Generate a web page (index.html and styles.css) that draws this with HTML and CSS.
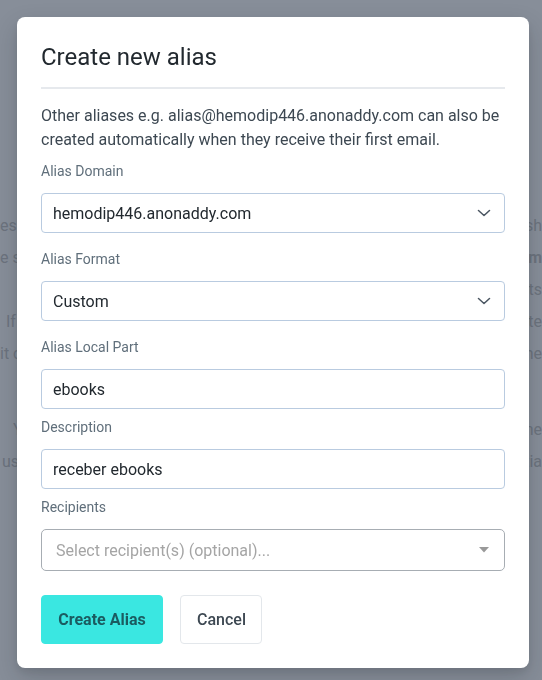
FILE: index.html
```html
<!DOCTYPE html>
<html lang="en">
<head>
<meta charset="utf-8">
<title>Create new alias</title>
<link rel="stylesheet" href="styles.css">
</head>
<body>
<div class="page">
  <div class="bg-line"><span>es c</span><span>nsh</span></div>
  <div class="bg-line"><span>e si</span><span class="bold">nam</span></div>
  <div class="bg-line"><span></span><span>its</span></div>
  <div class="bg-line"><span class="indent-if">If</span><span>ete</span></div>
  <div class="bg-line"><span>it c</span><span>the</span></div>
  <div class="bg-spacer"></div>
  <div class="bg-line"><span class="indent-y">Y</span><span>ne</span></div>
  <div class="bg-line"><span class="indent-us">us</span><span>tia</span></div>
</div>

<div class="overlay">
  <div class="modal">
    <h2 class="title">Create new alias</h2>
    <hr class="rule">
    <p class="intro">Other aliases e.g. alias@hemodip446.anonaddy.com can also be created automatically when they receive their first email.</p>

    <label class="label">Alias Domain</label>
    <div class="select select-gap">
      <span>hemodip446.anonaddy.com</span>
      <svg class="chevron" width="14" height="8" viewBox="0 0 14 8"><path d="M1.5 1.5 L7 6.5 L12.5 1.5" fill="none" stroke="#4a5561" stroke-width="1.5" stroke-linecap="round" stroke-linejoin="round"/></svg>
    </div>

    <label class="label">Alias Format</label>
    <div class="select select-gap">
      <span>Custom</span>
      <svg class="chevron" width="14" height="8" viewBox="0 0 14 8"><path d="M1.5 1.5 L7 6.5 L12.5 1.5" fill="none" stroke="#4a5561" stroke-width="1.5" stroke-linecap="round" stroke-linejoin="round"/></svg>
    </div>

    <label class="label">Alias Local Part</label>
    <input class="field" type="text" value="ebooks">

    <label class="label">Description</label>
    <input class="field" type="text" value="receber ebooks">

    <label class="label">Recipients</label>
    <div class="multiselect">
      <span class="placeholder">Select recipient(s) (optional)...</span>
      <svg class="caret" width="10" height="6" viewBox="0 0 10 6"><path d="M0 0 L10 0 L5 5.5 Z" fill="#999999"/></svg>
    </div>

    <div class="actions">
      <button class="btn btn-primary" type="button">Create Alias</button>
      <button class="btn btn-cancel" type="button">Cancel</button>
    </div>
  </div>
</div>
</body>
</html>
```

FILE: styles.css
```css
* { box-sizing: border-box; }

html, body {
  margin: 0;
  padding: 0;
}

body {
  background: #878e99;
  font-family: Roboto, "Noto Sans", sans-serif;
  width: 542px;
  height: 680px;
  overflow: hidden;
}

.page {
  padding-top: 210px;
  color: #6c737e;
  font-size: 16px;
}

.bg-line {
  display: flex;
  justify-content: space-between;
  height: 32px;
  line-height: 32px;
  white-space: nowrap;
}

.bg-line .bold { font-weight: 700; }
.indent-if { padding-left: 6px; }
.indent-y { padding-left: 13px; }
.indent-us { padding-left: 2px; }

.bg-spacer { height: 44px; }

.overlay {
  position: fixed;
  inset: 0;
  padding: 17px 0 0 17px;
}

.modal {
  width: 512px;
  background: #ffffff;
  border-radius: 8px;
  padding: 24px;
  box-shadow: 0 10px 25px rgba(20, 25, 35, 0.18), 0 4px 8px rgba(20, 25, 35, 0.08);
}

.title {
  margin: 0;
  font-size: 24px;
  line-height: 33px;
  font-weight: 400;
  color: #22292f;
}

.rule {
  margin: 13px 0 0;
  border: 0;
  height: 2px;
  background: #e6e9ed;
}

.intro {
  margin: 15px 0 9px;
  font-size: 16px;
  line-height: 24px;
  color: #3d4852;
}

.label {
  display: block;
  font-size: 14px;
  line-height: 20px;
  color: #606f7b;
  margin: 0 0 12px;
}

.select {
  display: flex;
  align-items: center;
  justify-content: space-between;
  height: 40px;
  padding: 0 13px 0 11px;
  border: 1px solid #b9cbe0;
  border-radius: 4px;
  font-size: 16px;
  color: #22292f;
}

.select-gap { margin-bottom: 16px; }

.chevron { display: block; }

.field {
  display: block;
  width: 100%;
  height: 40px;
  padding: 0 11px;
  margin: 0 0 8px;
  border: 1px solid #b9cbe0;
  border-radius: 4px;
  font-family: Roboto, "Noto Sans", sans-serif;
  font-size: 16px;
  color: #22292f;
  background: #ffffff;
  outline: none;
}

.multiselect {
  display: flex;
  align-items: center;
  justify-content: space-between;
  height: 42px;
  padding: 0 15px 0 14px;
  border: 1px solid #a7adb3;
  border-radius: 5px;
}

.placeholder {
  font-size: 16px;
  color: #a5a5a5;
}

.caret { display: block; }

.actions {
  display: flex;
  gap: 17px;
  margin-top: 24px;
}

.btn {
  font-family: Roboto, "Noto Sans", sans-serif;
  font-size: 16px;
  line-height: 23px;
  padding: 12px 16px;
  border-radius: 4px;
  cursor: pointer;
}

.btn-primary {
  background: #3ae7e1;
  border: 1px solid #3ae7e1;
  color: #1b5b60;
  font-weight: 700;
  width: 122px;
}

.btn-cancel {
  background: #ffffff;
  border: 1px solid #e3e7eb;
  color: #3d4852;
  font-weight: 500;
  width: 82px;
}
```
